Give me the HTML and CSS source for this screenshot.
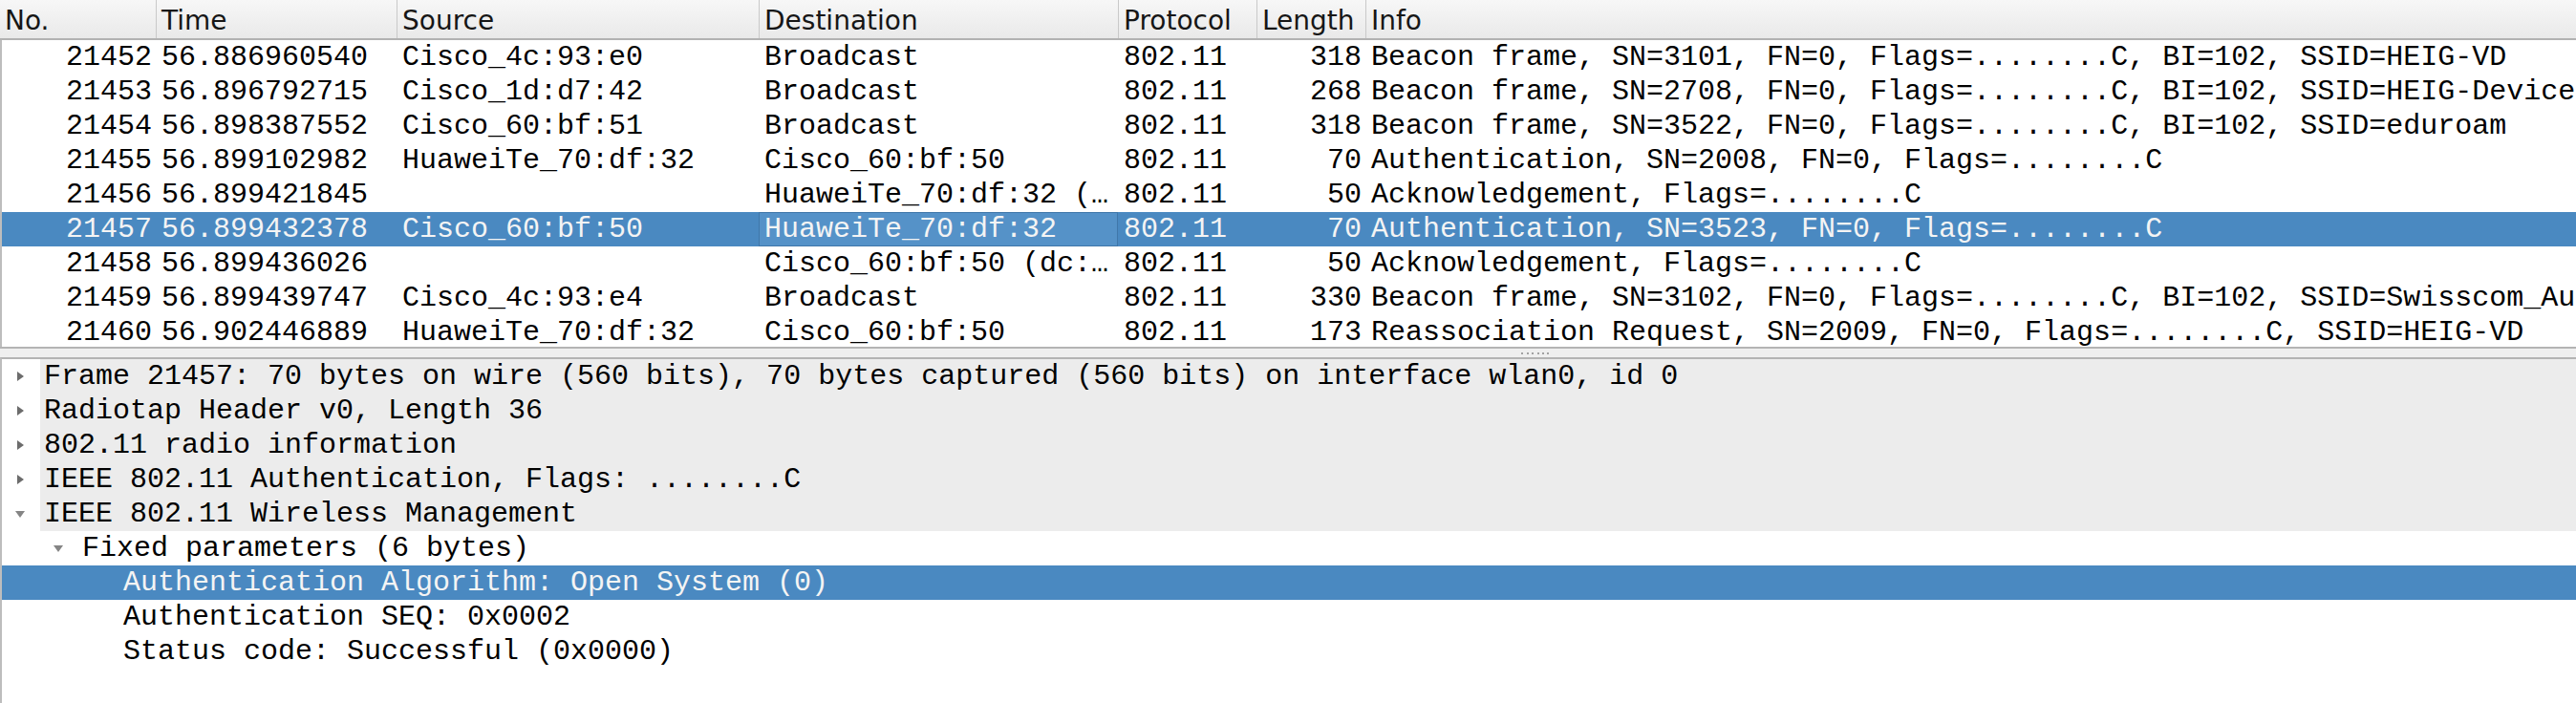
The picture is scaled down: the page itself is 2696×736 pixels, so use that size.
FILE: index.html
```html
<!DOCTYPE html>
<html>
<head>
<meta charset="utf-8">
<title>Wireshark</title>
<link rel="stylesheet" href="styles.css">
</head>
<body>
<div class="plist">
  <div class="phead">
    <div class="hc">No.</div>
    <div class="hc">Time</div>
    <div class="hc">Source</div>
    <div class="hc">Destination</div>
    <div class="hc">Protocol</div>
    <div class="hc">Length</div>
    <div class="hc">Info</div>
  </div>
  <div class="pbody">
    <div class="prow"><span class="c r">21452</span><span class="c">56.886960540</span><span class="c">Cisco_4c:93:e0</span><span class="c">Broadcast</span><span class="c">802.11</span><span class="c r">318</span><span class="c">Beacon frame, SN=3101, FN=0, Flags=........C, BI=102, SSID=HEIG-VD</span></div>
    <div class="prow"><span class="c r">21453</span><span class="c">56.896792715</span><span class="c">Cisco_1d:d7:42</span><span class="c">Broadcast</span><span class="c">802.11</span><span class="c r">268</span><span class="c">Beacon frame, SN=2708, FN=0, Flags=........C, BI=102, SSID=HEIG-Device</span></div>
    <div class="prow"><span class="c r">21454</span><span class="c">56.898387552</span><span class="c">Cisco_60:bf:51</span><span class="c">Broadcast</span><span class="c">802.11</span><span class="c r">318</span><span class="c">Beacon frame, SN=3522, FN=0, Flags=........C, BI=102, SSID=eduroam</span></div>
    <div class="prow"><span class="c r">21455</span><span class="c">56.899102982</span><span class="c">HuaweiTe_70:df:32</span><span class="c">Cisco_60:bf:50</span><span class="c">802.11</span><span class="c r">70</span><span class="c">Authentication, SN=2008, FN=0, Flags=........C</span></div>
    <div class="prow"><span class="c r">21456</span><span class="c">56.899421845</span><span class="c"></span><span class="c">HuaweiTe_70:df:32 (…</span><span class="c">802.11</span><span class="c r">50</span><span class="c">Acknowledgement, Flags=........C</span></div>
    <div class="prow sel"><span class="c r">21457</span><span class="c">56.899432378</span><span class="c">Cisco_60:bf:50</span><span class="c focus">HuaweiTe_70:df:32</span><span class="c">802.11</span><span class="c r">70</span><span class="c">Authentication, SN=3523, FN=0, Flags=........C</span></div>
    <div class="prow"><span class="c r">21458</span><span class="c">56.899436026</span><span class="c"></span><span class="c">Cisco_60:bf:50 (dc:…</span><span class="c">802.11</span><span class="c r">50</span><span class="c">Acknowledgement, Flags=........C</span></div>
    <div class="prow"><span class="c r">21459</span><span class="c">56.899439747</span><span class="c">Cisco_4c:93:e4</span><span class="c">Broadcast</span><span class="c">802.11</span><span class="c r">330</span><span class="c">Beacon frame, SN=3102, FN=0, Flags=........C, BI=102, SSID=Swisscom_Auto-Login</span></div>
    <div class="prow"><span class="c r">21460</span><span class="c">56.902446889</span><span class="c">HuaweiTe_70:df:32</span><span class="c">Cisco_60:bf:50</span><span class="c">802.11</span><span class="c r">173</span><span class="c">Reassociation Request, SN=2009, FN=0, Flags=........C, SSID=HEIG-VD</span></div>
  </div>
</div>
<div class="splitter"><span class="grip"></span></div>
<div class="details">
  <div class="drow lv0"><span class="tw"><i class="ar"></i></span><span class="lbl">Frame 21457: 70 bytes on wire (560 bits), 70 bytes captured (560 bits) on interface wlan0, id 0</span></div>
  <div class="drow lv0"><span class="tw"><i class="ar"></i></span><span class="lbl">Radiotap Header v0, Length 36</span></div>
  <div class="drow lv0"><span class="tw"><i class="ar"></i></span><span class="lbl">802.11 radio information</span></div>
  <div class="drow lv0"><span class="tw"><i class="ar"></i></span><span class="lbl">IEEE 802.11 Authentication, Flags: ........C</span></div>
  <div class="drow lv0"><span class="tw"><i class="ad"></i></span><span class="lbl">IEEE 802.11 Wireless Management</span></div>
  <div class="drow lv1"><span class="tw"><i class="ad"></i></span><span class="lbl">Fixed parameters (6 bytes)</span></div>
  <div class="drow lv2 sel"><span class="tw"></span><span class="lbl">Authentication Algorithm: Open System (0)</span></div>
  <div class="drow lv2"><span class="tw"></span><span class="lbl">Authentication SEQ: 0x0002</span></div>
  <div class="drow lv2"><span class="tw"></span><span class="lbl">Status code: Successful (0x0000)</span></div>
</div>
</body>
</html>
```

FILE: styles.css
```css
html, body {
  margin: 0;
  padding: 0;
}

body {
  width: 2696px;
  height: 736px;
  overflow: hidden;
  background: #ffffff;
  color: #000000;
  font-family: "Liberation Mono", "DejaVu Sans Mono", monospace;
  font-size: 30px;
}

/* ---------- packet list ---------- */
.plist {
  height: 363px;
  border-bottom: 2px solid #b4b4b4;
  overflow: hidden;
  display: flex;
  flex-direction: column;
}

.phead {
  display: grid;
  grid-template-columns: 163px 252px 379px 376px 145px 114px 1fr;
  height: 40px;
  flex: none;
  border-bottom: 2px solid #b2b2b2;
  background: linear-gradient(#f7f7f7, #e9e9e9);
  font-family: "DejaVu Sans", "Liberation Sans", sans-serif;
  font-size: 28px;
  color: #161616;
}

.hc {
  padding: 4px 0 0 5px;
  line-height: 36px;
  white-space: nowrap;
  overflow: hidden;
  border-left: 1px solid #c9c9c9;
}

.hc:first-child {
  border-left: none;
  padding-left: 5px;
}

.pbody {
  flex: 1;
  border-left: 2px solid #bdbdbd;
  overflow: hidden;
}

.prow {
  display: grid;
  grid-template-columns: 161px 252px 379px 376px 145px 114px 1fr;
  height: 36px;
  line-height: 36px;
}

.c {
  padding: 0 4px 0 6px;
  white-space: pre;
  overflow: hidden;
}

.c.r {
  text-align: right;
}

.prow.sel {
  background: #4a89c1;
  color: #f4f4f4;
}

.c.focus {
  background: #5592c8;
  box-shadow: inset 0 0 0 1px #3f77aa;
}

/* ---------- splitter ---------- */
.splitter {
  height: 9px;
  background: #efefef;
  display: flex;
  align-items: center;
}

.grip {
  margin-left: 1592px;
  width: 33px;
  height: 2px;
  background: repeating-linear-gradient(to right, #a2a2a2 0 2px, transparent 2px 5.5px);
}

/* ---------- details tree ---------- */
.details {
  height: 360px;
  border-top: 2px solid #b4b4b4;
  border-left: 2px solid #bdbdbd;
  overflow: hidden;
}

.drow {
  display: flex;
  height: 36px;
  line-height: 36px;
}

.tw {
  flex: none;
  width: 40px;
  display: flex;
  align-items: center;
  justify-content: center;
}

.lv1 .tw {
  margin-left: 40px;
}

.lv2 .tw {
  margin-left: 80px;
}

.lbl {
  flex: 1;
  padding-left: 4px;
  white-space: pre;
  overflow: hidden;
}

.lv2 .lbl {
  padding-left: 7px;
}

.lv0 .lbl {
  background: #ececec;
}

.drow.sel {
  background: #4a89c1;
  color: #f4f4f4;
}

.ar {
  width: 0;
  height: 0;
  border-left: 7px solid #6c6c6c;
  border-top: 5px solid transparent;
  border-bottom: 5px solid transparent;
  margin-left: -2px;
}

.ad {
  width: 0;
  height: 0;
  border-top: 7px solid #858585;
  border-left: 5px solid transparent;
  border-right: 5px solid transparent;
  margin-left: -2px;
}
```
